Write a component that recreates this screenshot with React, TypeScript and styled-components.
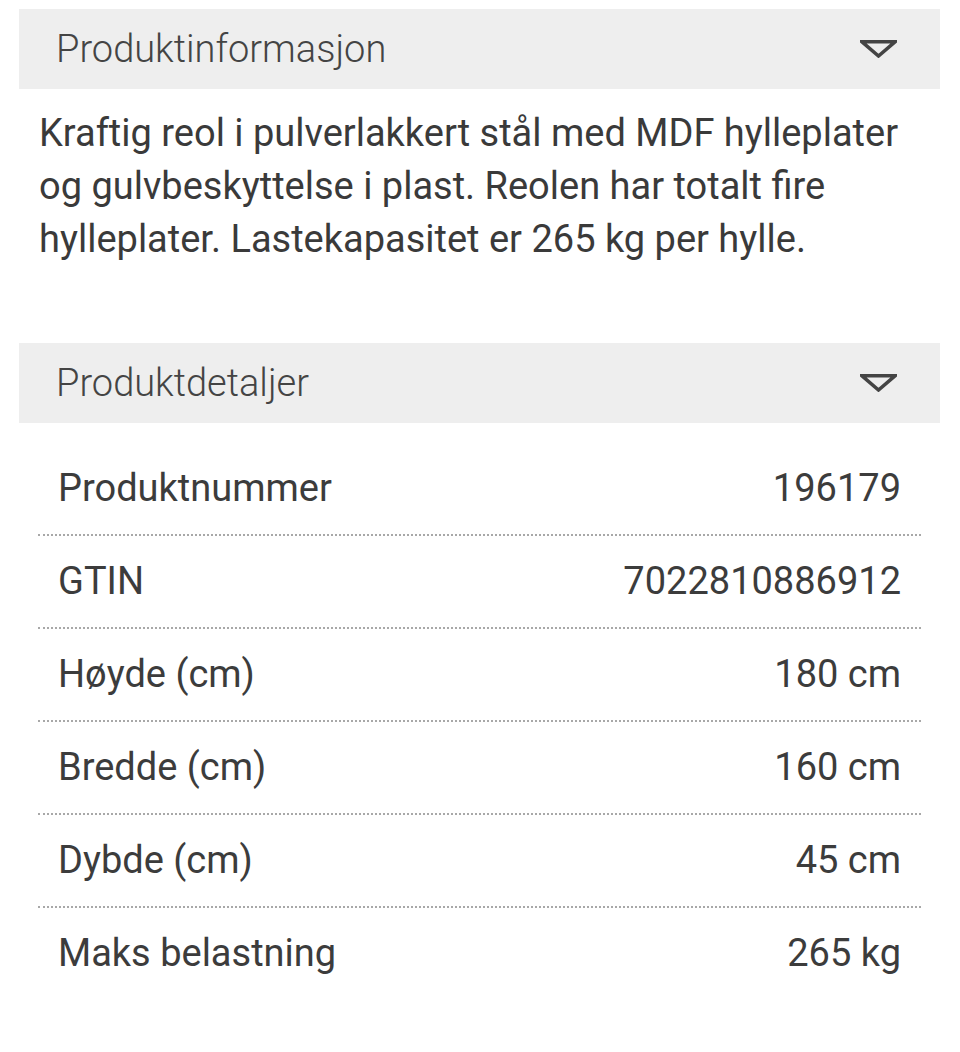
import React from 'react';
import styled, { createGlobalStyle } from 'styled-components';

const GlobalStyle = createGlobalStyle`
  html, body { margin: 0; padding: 0; background: #fff; }
  body { font-family: Roboto, "Noto Sans", sans-serif; color: #3c3c3c; }
`;

const Page = styled.div`
  padding: 9px 20px 0 19px;
`;

const SectionHeader = styled.div`
  height: 80px;
  background: #eeeeee;
  display: flex;
  align-items: center;
  justify-content: space-between;
  padding: 0 43px 0 37px;
`;

const SectionTitle = styled.h2`
  margin: 0;
  font-size: 38px;
  font-weight: 300;
  color: #444;
`;

const Description = styled.p`
  margin: 0 0 77px;
  padding: 18px 20px 0;
  font-size: 38px;
  line-height: 53px;
  color: #3a3a3a;
`;

const DetailList = styled.dl`
  margin: 20px 19px 0;
`;

const DetailRow = styled.div<{ $last?: boolean }>`
  display: flex;
  justify-content: space-between;
  align-items: center;
  height: 91px;
  padding: 0 20px;
  font-size: 38px;
  line-height: 91px;
  color: #3c3c3c;
  border-bottom: 2px dotted ${(p) => (p.$last ? 'transparent' : '#a8a8a8')};
`;

const Label = styled.dt`
  margin: 0;
`;

const Value = styled.dd`
  margin: 0;
`;

const Chevron = () => (
  <svg width="37" height="18" viewBox="0 0 37 18">
    <path d="M2 1.8 H35 L18.5 16 Z" fill="none" stroke="#444" strokeWidth="3.5" strokeLinejoin="miter" />
  </svg>
);

const details = [
  ['Produktnummer', '196179'],
  ['GTIN', '7022810886912'],
  ['Høyde (cm)', '180 cm'],
  ['Bredde (cm)', '160 cm'],
  ['Dybde (cm)', '45 cm'],
  ['Maks belastning', '265 kg'],
];

export default function App() {
  return (
    <Page>
      <GlobalStyle />
      <SectionHeader>
        <SectionTitle>Produktinformasjon</SectionTitle>
        <Chevron />
      </SectionHeader>
      <Description>
        Kraftig reol i pulverlakkert stål med MDF hylleplater og gulvbeskyttelse i plast. Reolen har totalt fire
        hylleplater. Lastekapasitet er 265 kg per hylle.
      </Description>
      <SectionHeader>
        <SectionTitle>Produktdetaljer</SectionTitle>
        <Chevron />
      </SectionHeader>
      <DetailList>
        {details.map(([label, value], i) => (
          <DetailRow key={label} $last={i === details.length - 1}>
            <Label>{label}</Label>
            <Value>{value}</Value>
          </DetailRow>
        ))}
      </DetailList>
    </Page>
  );
}
